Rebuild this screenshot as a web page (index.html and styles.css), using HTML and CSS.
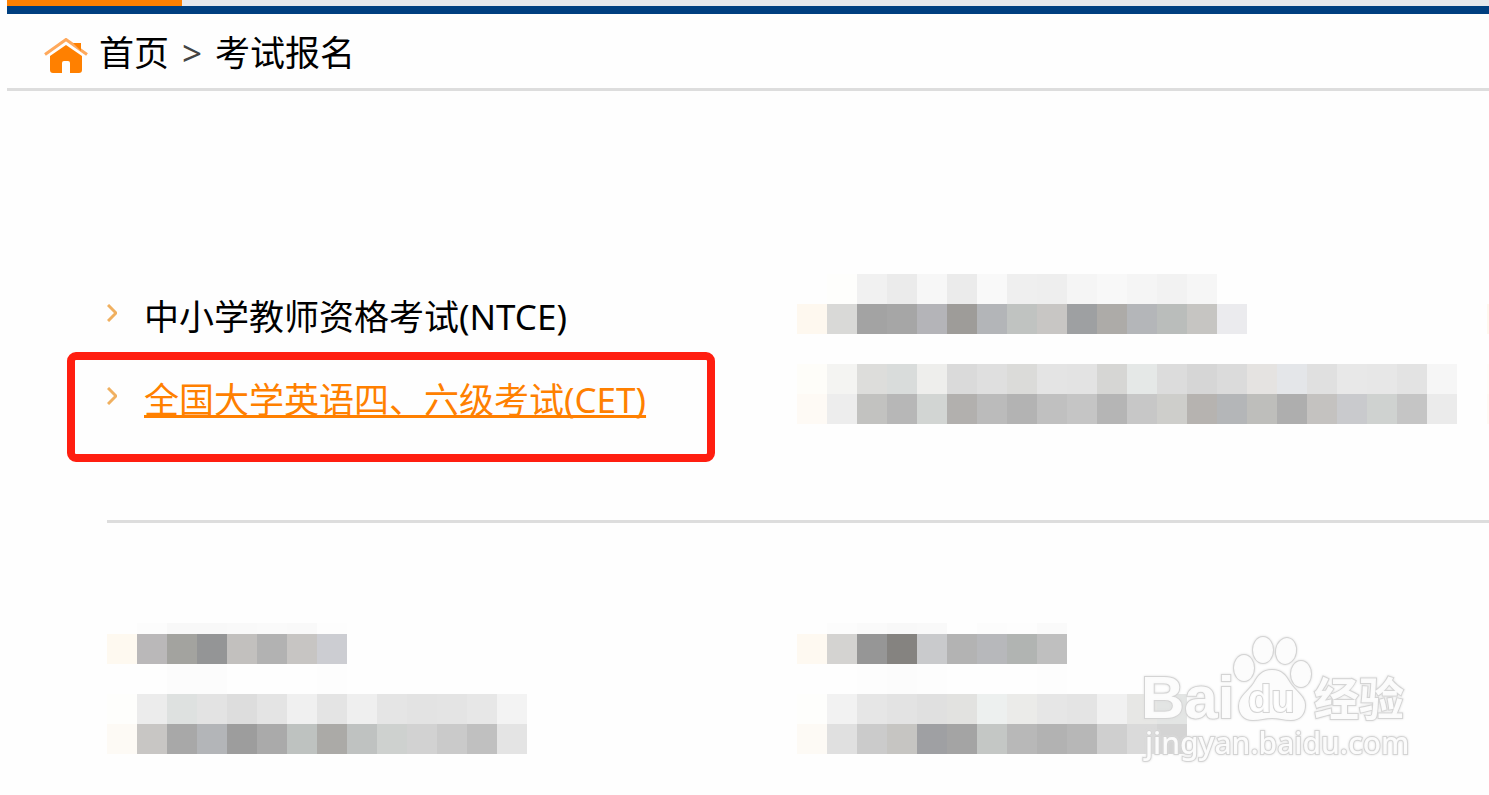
FILE: index.html
```html
<!DOCTYPE html>
<html lang="zh-CN">
<head>
  <meta charset="UTF-8">
  <title>考试报名</title>
  <meta name="viewport" content="width=device-width,initial-scale=1">
  <link rel="stylesheet" href="styles.css">
</head>
<body>
<header class="topbar">
  <div class="tab-active"></div>
</header>

<nav class="crumbs">
  <svg class="home" viewBox="0 0 44 35" aria-hidden="true">
    <path d="M1 16.500 22 1.500 43 16.500" fill="none" stroke="#ffa95c" stroke-width="3"/>
    <path d="M29 5h8v8z"/>
    <path d="M6 18 22 7l16 11v14q0 3-3 3h-9V25q0-2-2-2h-4q-2 0-2 2v10H9q-3 0-3-3z"/>
  </svg>
  <a href="#">首页</a>
  <span class="sep">&gt;</span>
  <a href="#">考试报名</a>
</nav>

<main>
  <section class="exams">
    <ul class="exam-list">
      <li>
        <svg class="arrow" viewBox="0 0 10 18" aria-hidden="true"><path d="M1 1 9 9 1 17"/></svg>
        <a href="#">中小学教师资格考试(NTCE)</a>
      </li>
      <li class="marked">
        <svg class="arrow" viewBox="0 0 10 18" aria-hidden="true"><path d="M1 1 9 9 1 17"/></svg>
        <a href="#" class="current">全国大学英语四、六级考试(CET)</a>
      </li>
    </ul>
    <div class="mosaic">
      <div class="row" data-cells="fefefe fefefc f1f1f1 ebebeb f7f7f7 ebebeb f9f9f9 efefef eeeeee f5f5f5 f8f8f8 f5f5f5 f2f2f2 f6f6f6"></div>
      <div class="row" data-cells="fef8ef d9d9d7 a3a3a3 a6a6a6 b4b4b8 9e9c99 b3b5b8 c0c3c1 c8c6c4 9ea0a2 adaba8 b4b6b9 babdbb c6c5c2 ebebee"></div>
      <div class="row"></div>
      <div class="row" data-cells="fefdf9 f4f4f2 dddddb d9dcdb eeeeec dadada dfdfdf dbdbd9 e4e4e4 e3e3e3 d6d6d4 e5e8e7 dcdcdc d6d6d6 dbdbdb e5e3e1 e4e6e9 e0e0e0 e8e8e8 e7e7e7 e3e3e3 f6f6f6"></div>
      <div class="row" data-cells="fefaf5 ededed c2c2c0 b7b7b7 d2d5d3 b2b0ae bbbbbb b3b3b3 c0c0c0 c5c5c5 b5b5b5 c7c7c7 cececb b6b3b0 b4b6b8 bebebb aeaeae c4c2c0 c9cacd cfd2d0 c5c5c5 ebebeb"></div>
    </div>
    <div class="mosaic">
      <div class="row"></div>
      <div class="row" data-cells="fef8ef"></div>
      <div class="row"></div>
      <div class="row" data-cells="fefdf9"></div>
      <div class="row" data-cells="fefaf5"></div>
    </div>
  </section>

  <section class="exams">
    <div class="mosaic">
      <div class="row thin" data-cells="fefefe fcfcfc f8f8f8 f8f8f8 f9f9f9 fafafa f9f9f9 fdfdfd"></div>
      <div class="row" data-cells="fef9f0 bab8b9 a3a39f 949596 c2c0be b2b2b2 c7c5c3 cccdd2"></div>
      <div class="row" data-cells="fefefe fefefe fcfcfc fcfcfc fefefe fefefe fefefe fdfdfd"></div>
      <div class="row" data-cells="fefefc ececec dee1e0 e3e3e3 dddddd e4e4e4 f0f0f0 e4e4e4 efefef e5e5e5 e3e3e3 e4e4e4 e7e7e7 f3f3f3"></div>
      <div class="row" data-cells="fdfaf5 c8c6c4 a8a8a8 b3b5b8 9d9d9d aaaaaa bec2c0 abaaa7 bfc2c1 ced1cf d2d2d2 cacaca c0c0c0 e4e4e4"></div>
    </div>
    <div class="mosaic">
      <div class="row thin" data-cells="fefefe fcfcfc fafafa f8f8f8 f9f9f9 fefefe fcfcfc fdfdfd fafafa"></div>
      <div class="row" data-cells="fef9f1 d4d3d1 969696 858380 c9cacc b3b3b3 b7b8bb b1b4b2 bfbfbf"></div>
      <div class="row" data-cells="fefefe fefefe fdfdfd fcfcfc fdfdfd fefefe fefefe fefefe fdfdfd"></div>
      <div class="row" data-cells="fefefc f2f2f2 e6e6e6 e3e3e3 e0e0e0 e2e2e0 edf0ef ebebe9 e6e6e6 e4e4e4 f1f1f1 e7e7e5 e3e5e4"></div>
      <div class="row" data-cells="fdfaf5 e0e0e0 cbcbcb c6c5c2 9fa0a3 a4a4a4 c4c7c5 b8b8b8 b2b2b2 b7b7b7 cfcfcf dadada d4d4d4"></div>
    </div>
  </section>
</main>

<svg class="watermark" viewBox="0 0 300 150" role="img" aria-label="Baidu 经验">
  <g class="outline">
    <ellipse cx="114" cy="48" rx="10" ry="13"/>
    <ellipse cx="133" cy="30" rx="10" ry="13"/>
    <ellipse cx="156" cy="31" rx="10" ry="13" transform="rotate(10 156 31)"/>
    <ellipse cx="171" cy="54" rx="10" ry="13"/>
    <path d="M142 50c-10 0-14 6-18 13-5 8-15 13-15 23 0 8 5 14 14 14 7 0 12-2 19-2s12 2 19 2c9 0 14-6 14-15 0-9-10-14-15-22-4-7-8-13-18-13z"/>
    <text x="11" y="98" class="bai">Bai</text>
    <text x="118" y="92" class="du">du</text>
    <text x="184" y="96" class="jy">经验</text>
    <text x="15" y="134" class="url">jingyan.baidu.com</text>
  </g>
</svg>
<script src="script.js"></script>
</body>
</html>
```
FILE: styles.css
```css
:root {
  --orange: #ff8000;
  --navy: #003f80;
  --line: #ddd;
  --bg: #fefefe;
  --sans: "Noto Sans", "Noto Sans CJK SC", sans-serif;
}
*, *::after {
  box-sizing: border-box;
}
body {
  margin: 0;
  padding-left: 7px;
  background: var(--bg);
  color: #000;
  font-family: var(--sans);
  font-size: 35px;
  line-height: 50px;
}
a {
  color: inherit;
  text-decoration: none;
}
.topbar {
  height: 14px;
  background: #e6e8ec;
  border-bottom: 8px solid var(--navy);
}
.tab-active {
  width: 175px;
  height: 6px;
  background: var(--orange);
}
.crumbs {
  display: flex;
  align-items: center;
  height: 77px;
  padding: 4px 0 0 37px;
  border-bottom: 3px solid var(--line);
}
.home {
  width: 44px;
  height: 35px;
  margin: 4px 11px 0 0;
  fill: var(--orange);
}
.sep {
  width: 46px;
  color: #444;
  text-align: center;
}
main {
  padding: 183px 0 40px 100px;
}
.exams {
  display: grid;
  grid-template-columns: calc(50% - 1px) calc(50% - 1px) 1fr;
}
.exams + .exams {
  margin-top: 80px;
  padding-top: 100px;
  border-top: 3px solid var(--line);
}
.exam-list {
  margin: 0;
  padding: 0;
  list-style: none;
}
.exam-list li {
  position: relative;
  display: flex;
  height: 83px;
  padding-top: 18px;
  white-space: nowrap;
}
.arrow {
  width: 10px;
  height: 18px;
  margin: 12px 27px 0 0;
  fill: none;
  stroke: #f0b060;
  stroke-width: 3;
}
.current {
  color: var(--orange);
  text-decoration: underline;
  text-decoration-thickness: 3px;
  text-underline-offset: 2px;
  text-decoration-skip-ink: none;
}
/* red frame around the entry to pick */
.marked::after {
  content: "";
  position: absolute;
  left: -40px;
  top: -5px;
  width: 648px;
  height: 110px;
  border: 8px solid #ff1e10;
  border-radius: 9px;
}
.mosaic {
  min-width: 0;
  overflow: hidden;
}
.row {
  display: flex;
  height: 30px;
}
.row span {
  flex: 0 0 30px;
}
.thin {
  height: 11px;
}
.watermark {
  position: absolute;
  right: 59px;
  top: 620px;
  width: 300px;
  height: 150px;
}
.outline {
  fill: #fff;
  fill-opacity: 0.9;
  stroke: #d4d4d4;
  stroke-width: 2;
  paint-order: stroke;
  filter: drop-shadow(0 0 1px #ddd);
}
.bai {
  font: bold 60px "Liberation Sans", sans-serif;
}
.du {
  font: bold 38px "Liberation Sans", sans-serif;
}
.jy {
  font: bold 45px "Noto Sans CJK SC", sans-serif;
}
.url {
  font: 500 30px "Noto Sans", sans-serif;
}
```
FILE: script.js
```js
// fill each mosaic row with its coloured cells
document.querySelectorAll('.row[data-cells]').forEach(row => {
  row.dataset.cells.split(' ').forEach(color => {
    const cell = document.createElement('span');
    cell.style.background = '#' + color;
    row.appendChild(cell);
  });
});
```
